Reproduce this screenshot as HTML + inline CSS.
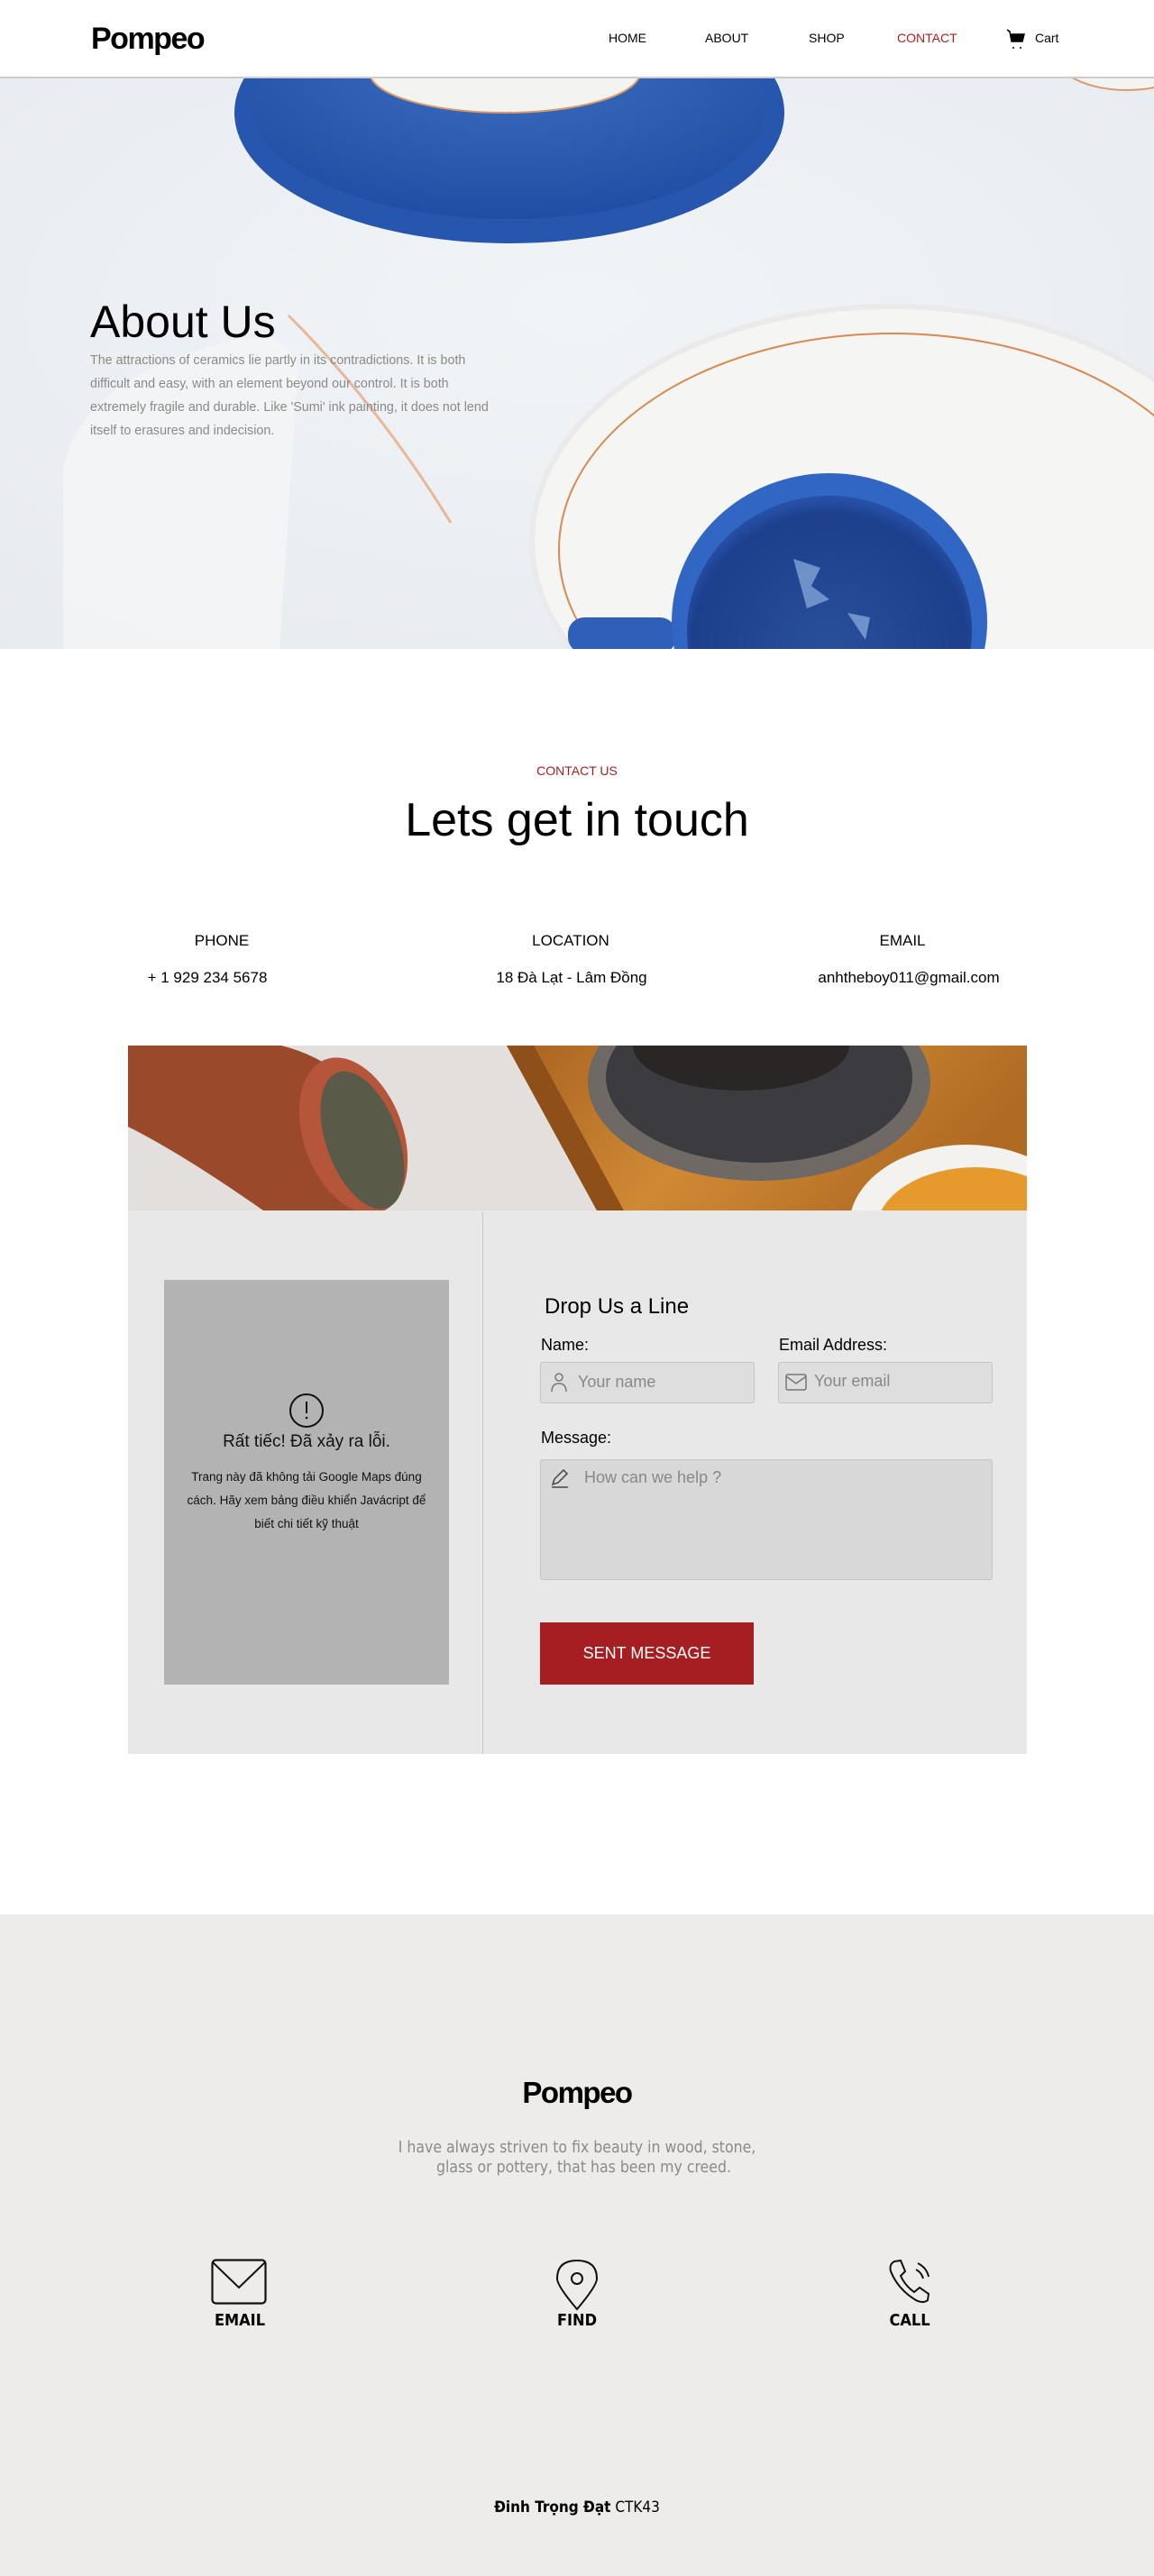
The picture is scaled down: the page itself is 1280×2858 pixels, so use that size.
<!DOCTYPE html>
<html><head><meta charset="utf-8">
<style>
*{margin:0;padding:0;box-sizing:border-box}
body{width:1280px;height:2858px;position:relative;background:#fff;font-family:"Liberation Sans","Noto Sans CJK SC",sans-serif;color:#000;overflow:hidden}
.a{position:absolute}
.logo{font-family:"Liberation Sans",sans-serif;font-weight:bold;font-size:34px;letter-spacing:-1.5px}
.nav{font-size:14px;top:34px}
.c{text-align:center}
.fld{position:absolute;background:#dedede;border:1px solid #c4c4c4;border-radius:3px;color:#888;font-size:18px}
</style></head><body>

<div class="a" style="left:0;top:0;width:1280px;height:87px;background:#fff;border-bottom:2px solid #ccc;z-index:2"></div>
<div class="a logo" style="left:101px;top:24px;z-index:3">Pompeo</div>
<div class="a nav" style="left:675px;z-index:3">HOME</div>
<div class="a nav" style="left:782px;z-index:3">ABOUT</div>
<div class="a nav" style="left:897px;z-index:3">SHOP</div>
<div class="a nav" style="left:995px;color:#b11c1c;z-index:3">CONTACT</div>
<svg class="a" style="left:1116px;top:32px;z-index:3" width="24" height="24" viewBox="0 0 24 24"><path d="M1 1 L4 3 L6 14 H18 L20 6 H5" fill="#000" stroke="#000" stroke-width="1.5"/><circle cx="8" cy="21" r="1" fill="#000"/><circle cx="16" cy="21" r="1" fill="#000"/></svg>
<div class="a nav" style="left:1148px;z-index:3">Cart</div>

<svg class="a" style="left:0;top:87px" width="1280" height="633" viewBox="0 87 1280 633">
<defs>
<radialGradient id="bg" cx="0.5" cy="0.4" r="0.8"><stop offset="0" stop-color="#f1f4f7"/><stop offset="1" stop-color="#e6ebf0"/></radialGradient>
<radialGradient id="bl" cx="0.5" cy="0.3" r="0.7"><stop offset="0" stop-color="#3f6fbf"/><stop offset="1" stop-color="#1f4ea4"/></radialGradient>
<radialGradient id="cup" cx="0.5" cy="0.55" r="0.6"><stop offset="0" stop-color="#2a4f9a"/><stop offset="0.8" stop-color="#1d3f8c"/><stop offset="1" stop-color="#2f61c2"/></radialGradient>
</defs>
<rect x="0" y="87" width="1280" height="633" fill="url(#bg)"/>
<ellipse cx="565" cy="125" rx="305" ry="145" fill="#2656ad"/>
<ellipse cx="565" cy="118" rx="285" ry="125" fill="url(#bl)"/>
<ellipse cx="560" cy="80" rx="150" ry="45" fill="#f3f3f1" stroke="#d89a6a" stroke-width="2"/>
<ellipse cx="1250" cy="60" rx="80" ry="40" fill="#f3f3f1" stroke="#d89a6a" stroke-width="2"/>
<path d="M70 520 Q90 420 250 380 Q330 360 330 420 L310 720 L70 720 Z" fill="#f4f5f6" opacity="0.8"/>
<path d="M320 350 Q420 450 500 580" stroke="#e6a070" stroke-width="3" fill="none" opacity="0.7"/>
<ellipse cx="990" cy="600" rx="400" ry="260" fill="#f5f5f4" stroke="#eaeaea" stroke-width="6"/>
<ellipse cx="990" cy="610" rx="370" ry="240" fill="none" stroke="#d98a52" stroke-width="2"/>
<rect x="630" y="685" width="120" height="40" rx="18" fill="#2e5fb9"/>
<ellipse cx="920" cy="690" rx="175" ry="165" fill="#3266c4"/>
<ellipse cx="920" cy="700" rx="158" ry="150" fill="url(#cup)"/>
<path d="M880 620 l30 10 l-10 20 l20 15 l-25 10z M940 680 l25 5 l-5 25 z" fill="#8fb0e0" opacity="0.7"/>
</svg>
<div class="a" style="left:100px;top:328px;font-size:50px;color:#000">About Us</div>
<div class="a" style="left:100px;top:387px;width:445px;font-size:14.3px;line-height:26px;color:#8a8a8a">The attractions of ceramics lie partly in its contradictions. It is both difficult and easy, with an element beyond our control. It is both extremely fragile and durable. Like 'Sumi' ink painting, it does not lend itself to erasures and indecision.</div>

<div class="a c" style="left:0;width:1280px;top:847px;font-size:14px;color:#a51e22">CONTACT US</div>
<div class="a c" style="left:0;width:1280px;top:880px;font-size:52px">Lets get in touch</div>
<div class="a c" style="left:146px;width:200px;top:1034px;font-size:17px">PHONE</div>
<div class="a c" style="left:533px;width:200px;top:1034px;font-size:17px">LOCATION</div>
<div class="a c" style="left:901px;width:200px;top:1034px;font-size:17px">EMAIL</div>
<div class="a c" style="left:130px;width:200px;top:1075px;font-size:17px">+ 1 929 234 5678</div>
<div class="a c" style="left:484px;width:300px;top:1075px;font-size:17px">18 Đà Lạt - Lâm Đồng</div>
<div class="a c" style="left:858px;width:300px;top:1075px;font-size:17px">anhtheboy011@gmail.com</div>

<svg class="a" style="left:142px;top:1160px" width="997" height="183" viewBox="0 0 997 183">
<defs>
<linearGradient id="wood" x1="0" y1="0" x2="1" y2="0.3"><stop offset="0" stop-color="#a8621f"/><stop offset="0.5" stop-color="#d08a35"/><stop offset="1" stop-color="#b06a22"/></linearGradient>
</defs>
<rect width="997" height="183" fill="#e2dfdc"/>
<polygon points="420,0 997,0 997,183 520,183" fill="url(#wood)"/>
<polygon points="420,0 450,0 550,183 520,183" fill="#8e4f18"/>
<path d="M0 0 L170 0 Q250 20 290 100 Q300 160 260 183 L150 183 Q60 120 0 90 Z" fill="#9a4a2a"/>
<ellipse cx="250" cy="100" rx="55" ry="90" fill="#b5553a" transform="rotate(-20 250 100)"/>
<ellipse cx="260" cy="105" rx="40" ry="80" fill="#5a5a48" transform="rotate(-20 260 105)"/>
<ellipse cx="700" cy="40" rx="190" ry="110" fill="#6e6964"/>
<ellipse cx="700" cy="35" rx="170" ry="95" fill="#3c3c40"/>
<ellipse cx="680" cy="0" rx="120" ry="50" fill="#2a2626"/>
<ellipse cx="930" cy="200" rx="130" ry="90" fill="#f4f2ee"/>
<ellipse cx="940" cy="205" rx="110" ry="70" fill="#e79a2c"/>
</svg>

<div class="a" style="left:142px;top:1343px;width:997px;height:603px;background:#e8e8e8"></div>
<div class="a" style="left:535px;top:1345px;width:1px;height:601px;background:#c8c8c8"></div>
<div class="a" style="left:182px;top:1420px;width:316px;height:449px;background:#b3b3b3"></div>
<svg class="a" style="left:320px;top:1545px" width="40" height="40" viewBox="0 0 40 40"><circle cx="20" cy="20" r="18" fill="none" stroke="#111" stroke-width="2"/><line x1="20" y1="10" x2="20" y2="23" stroke="#111" stroke-width="2"/><circle cx="20" cy="28" r="1.3" fill="#111"/></svg>
<div class="a c" style="left:182px;width:316px;top:1589px;font-size:19px;color:#111">Rất tiếc! Đã xảy ra lỗi.</div>
<div class="a c" style="left:197px;width:286px;top:1626px;font-size:13.5px;line-height:26px;color:#111">Trang này đã không tải Google Maps đúng cách. Hãy xem bảng điều khiển Javácript để biết chi tiết kỹ thuật</div>

<div class="a" style="left:604px;top:1436px;font-size:24px">Drop Us a Line</div>
<div class="a" style="left:600px;top:1482px;font-size:18px">Name:</div>
<div class="a" style="left:864px;top:1482px;font-size:18px">Email Address:</div>
<div class="fld" style="left:599px;top:1511px;width:238px;height:46px"></div>
<svg class="a" style="left:609px;top:1522px" width="22" height="24" viewBox="0 0 22 24"><circle cx="11" cy="6" r="4" fill="none" stroke="#777" stroke-width="1.5"/><path d="M3 22 Q3 13 11 13 Q19 13 19 22" fill="none" stroke="#777" stroke-width="1.5"/></svg>
<div class="a" style="left:641px;top:1523px;font-size:18px;color:#888">Your name</div>
<div class="fld" style="left:863px;top:1511px;width:238px;height:46px"></div>
<svg class="a" style="left:871px;top:1524px" width="24" height="20" viewBox="0 0 24 20"><rect x="1" y="1" width="22" height="17" rx="2" fill="none" stroke="#777" stroke-width="1.5"/><path d="M1 3 L12 11 L23 3" fill="none" stroke="#777" stroke-width="1.5"/></svg>
<div class="a" style="left:903px;top:1522px;font-size:18px;color:#888">Your email</div>
<div class="a" style="left:600px;top:1585px;font-size:18px">Message:</div>
<div class="fld" style="left:599px;top:1619px;width:502px;height:134px;background:#d8d8d8"></div>
<svg class="a" style="left:609px;top:1628px" width="24" height="24" viewBox="0 0 24 24"><path d="M4 19 L6 13 L16 3 L20 7 L10 17 Z" fill="none" stroke="#444" stroke-width="1.5"/><line x1="3" y1="22" x2="21" y2="22" stroke="#444" stroke-width="1.5"/></svg>
<div class="a" style="left:648px;top:1629px;font-size:18px;color:#888">How can we help ?</div>
<div class="a c" style="left:599px;top:1800px;width:237px;height:69px;background:#a51e22;color:#fff;font-size:18px;line-height:69px">SENT MESSAGE</div>

<div class="a" style="left:0;top:2124px;width:1280px;height:734px;background:#edecea"></div>
<div class="a logo c" style="left:0;width:1280px;top:2303px;font-size:33px">Pompeo</div>
<div class="a c" style="left:0;width:1280px;top:2372px;font-size:17.5px;line-height:22px;color:#8a8a8a;font-family:'DejaVu Sans Condensed','DejaVu Sans',sans-serif">I have always striven to fix beauty in wood, stone,<br>&nbsp;&nbsp;&nbsp;glass or pottery, that has been my creed.</div>
<svg class="a" style="left:234px;top:2506px" width="62" height="52" viewBox="0 0 62 52"><rect x="1.5" y="1.5" width="59" height="48" rx="4" fill="none" stroke="#111" stroke-width="2.2"/><path d="M2 4 L31 32 L60 4" fill="none" stroke="#111" stroke-width="2"/></svg>
<div class="a c" style="left:216px;width:100px;top:2564px;font-size:18px;font-weight:bold;font-family:'DejaVu Sans Condensed','DejaVu Sans',sans-serif">EMAIL</div>
<svg class="a" style="left:616px;top:2506px" width="48" height="58" viewBox="0 0 48 58"><path d="M24 56 Q2 30 2 22 Q2 2 24 2 Q46 2 46 22 Q46 30 24 56 Z" fill="none" stroke="#111" stroke-width="2"/><circle cx="24" cy="22" r="6" fill="none" stroke="#111" stroke-width="2"/></svg>
<div class="a c" style="left:590px;width:100px;top:2564px;font-size:18px;font-weight:bold;font-family:'DejaVu Sans Condensed','DejaVu Sans',sans-serif">FIND</div>
<svg class="a" style="left:984px;top:2506px" width="48" height="50" viewBox="0 0 48 50"><path d="M8 3 L15 2 L20 14 L15 19 Q20 30 30 37 L36 32 L46 39 L45 46 Q40 50 32 46 Q12 34 4 14 Q2 6 8 3 Z" fill="none" stroke="#111" stroke-width="2"/><path d="M32 12 Q38 15 40 22 M34 5 Q44 10 46 20" fill="none" stroke="#111" stroke-width="2"/></svg>
<div class="a c" style="left:959px;width:100px;top:2564px;font-size:18px;font-weight:bold;font-family:'DejaVu Sans Condensed','DejaVu Sans',sans-serif">CALL</div>
<div class="a c" style="left:0;width:1280px;top:2772px;font-size:17px;font-family:'DejaVu Sans Condensed','DejaVu Sans',sans-serif"><b>Đinh Trọng Đạt</b> CTK43</div>
</body></html>
